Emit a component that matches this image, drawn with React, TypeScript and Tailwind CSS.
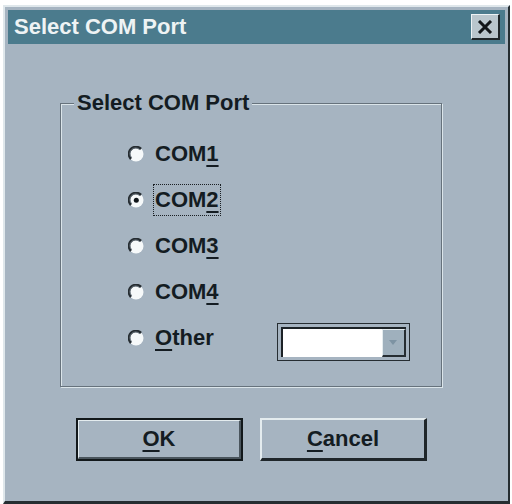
import React from "react";

const font = { fontFamily: '"Liberation Sans", Arial, sans-serif' };

function Radio({ checked }: { checked?: boolean }) {
  return (
    <svg width="16" height="16" viewBox="0 0 16 16" className="shrink-0">
      <circle cx="8" cy="8" r="7.5" fill="#f6f9fa" />
      <path d="M 3 13 A 7 7 0 0 1 13 3" fill="none" stroke="#252c31" strokeWidth="2.5" />
      <path d="M 3.6 11.6 A 5.3 5.3 0 0 1 11.6 3.6" fill="none" stroke="#6a7680" strokeWidth="1" />
      {checked && <circle cx="8.3" cy="8.3" r="2.5" fill="#10161a" />}
    </svg>
  );
}

function Row({ label, u, checked, focus }: { label: string; u: string; checked?: boolean; focus?: boolean }) {
  const idx = label.indexOf(u);
  return (
    <div className="flex h-[46px] items-center">
      <Radio checked={checked} />
      <span
        className={
          "ml-[9px] text-[22px] font-bold leading-none text-[#141c22] " +
          (focus ? "border border-dotted border-[#1a1f24] px-[1px] py-[4px]" : "px-[2px] py-[5px]")
        }
      >
        {label.slice(0, idx)}
        <span className="underline decoration-2 underline-offset-[4px]">{u}</span>
        {label.slice(idx + 1)}
      </span>
    </div>
  );
}

export default function App() {
  return (
    <div className="h-[504px] w-[512px] overflow-hidden bg-white" style={font}>
      <div className="ml-[3px] mt-[5px] flex h-[499px] w-[507px] flex-col border-b-[3px] border-l-2 border-r-2 border-t-2 border-b-[#252d31] border-l-[#dfe7eb] border-r-[#252d31] border-t-[#dfe7eb] bg-[#a6b4c1] px-[3px] pt-[3px]">
        {/* title bar */}
        <div className="flex h-[34px] items-center bg-[#4b7b8d] pl-[6px] pr-[5px]">
          <span className="text-[22px] font-bold leading-none text-[#eef3f4]">Select COM Port</span>
          <div className="ml-auto flex h-[26px] w-[29px] items-center justify-center border-b-2 border-l border-r-2 border-t border-b-[#1f2629] border-l-[#eef3f5] border-r-[#1f2629] border-t-[#eef3f5] bg-[#b9c6cd]">
            <svg width="16" height="14" viewBox="0 0 16 14">
              <path d="M2 1 L14 13 M14 1 L2 13" stroke="#111619" strokeWidth="3" />
            </svg>
          </div>
        </div>

        {/* group box */}
        <div className="relative ml-[52px] mt-[59px] h-[284px] w-[382px] border border-[#66727c] shadow-[inset_1px_1px_0_#dbe5ea,1px_1px_0_#dbe5ea]">
          <div className="absolute -top-[12px] left-[13px] bg-[#a6b4c1] px-[3px] text-[22px] font-bold leading-none text-[#141c22]">
            Select COM Port
          </div>
          <div className="flex flex-col pl-[67px] pt-[27px]">
            <Row label="COM1" u="1" />
            <Row label="COM2" u="2" checked focus />
            <Row label="COM3" u="3" />
            <Row label="COM4" u="4" />
            <div className="flex h-[46px] items-center">
              <Radio />
              <span className="ml-[9px] px-[2px] py-[5px] text-[22px] font-bold leading-none text-[#141c22]">
                <span className="underline decoration-2 underline-offset-[4px]">O</span>ther
              </span>
              <div className="ml-[61px] mt-[8px] flex h-[38px] w-[133px] border border-[#262d32] bg-[#a6b4c1] p-[3px]">
                <div className="flex flex-1 border-l-2 border-t-2 border-l-[#1c2226] border-t-[#1c2226] bg-white">
                  <div className="flex-1" />
                  <div className="flex w-[24px] items-center justify-center border-b-2 border-l border-r-2 border-t border-b-[#262d32] border-l-[#e4ecef] border-r-[#262d32] border-t-[#e4ecef] bg-[#9fb0bd]">
                    <svg width="8" height="5" viewBox="0 0 8 5">
                      <path d="M0 0 H8 L4 5 Z" fill="#7d93a3" />
                    </svg>
                  </div>
                </div>
              </div>
            </div>
          </div>
        </div>

        {/* buttons */}
        <div className="ml-[68px] mt-[31px] flex gap-[17px]">
          <div className="flex h-[43px] w-[167px] border-2 border-[#12181b] bg-[#a6b4c1]">
            <div className="flex flex-1 items-center justify-center border-b-2 border-l border-r-2 border-t border-b-[#4a555d] border-l-[#e4ecef] border-r-[#4a555d] border-t-[#e4ecef] text-[22px] font-bold leading-none text-[#141c22]">
              <span className="underline decoration-2 underline-offset-[4px]">O</span>K
            </div>
          </div>
          <div className="flex h-[43px] w-[167px] items-center justify-center border-b-[3px] border-l-2 border-r-[3px] border-t-2 border-b-[#1f262a] border-l-[#e4ecef] border-r-[#1f262a] border-t-[#e4ecef] text-[22px] font-bold leading-none text-[#141c22]">
            <span className="underline decoration-2 underline-offset-[4px]">C</span>ancel
          </div>
        </div>
      </div>
    </div>
  );
}
